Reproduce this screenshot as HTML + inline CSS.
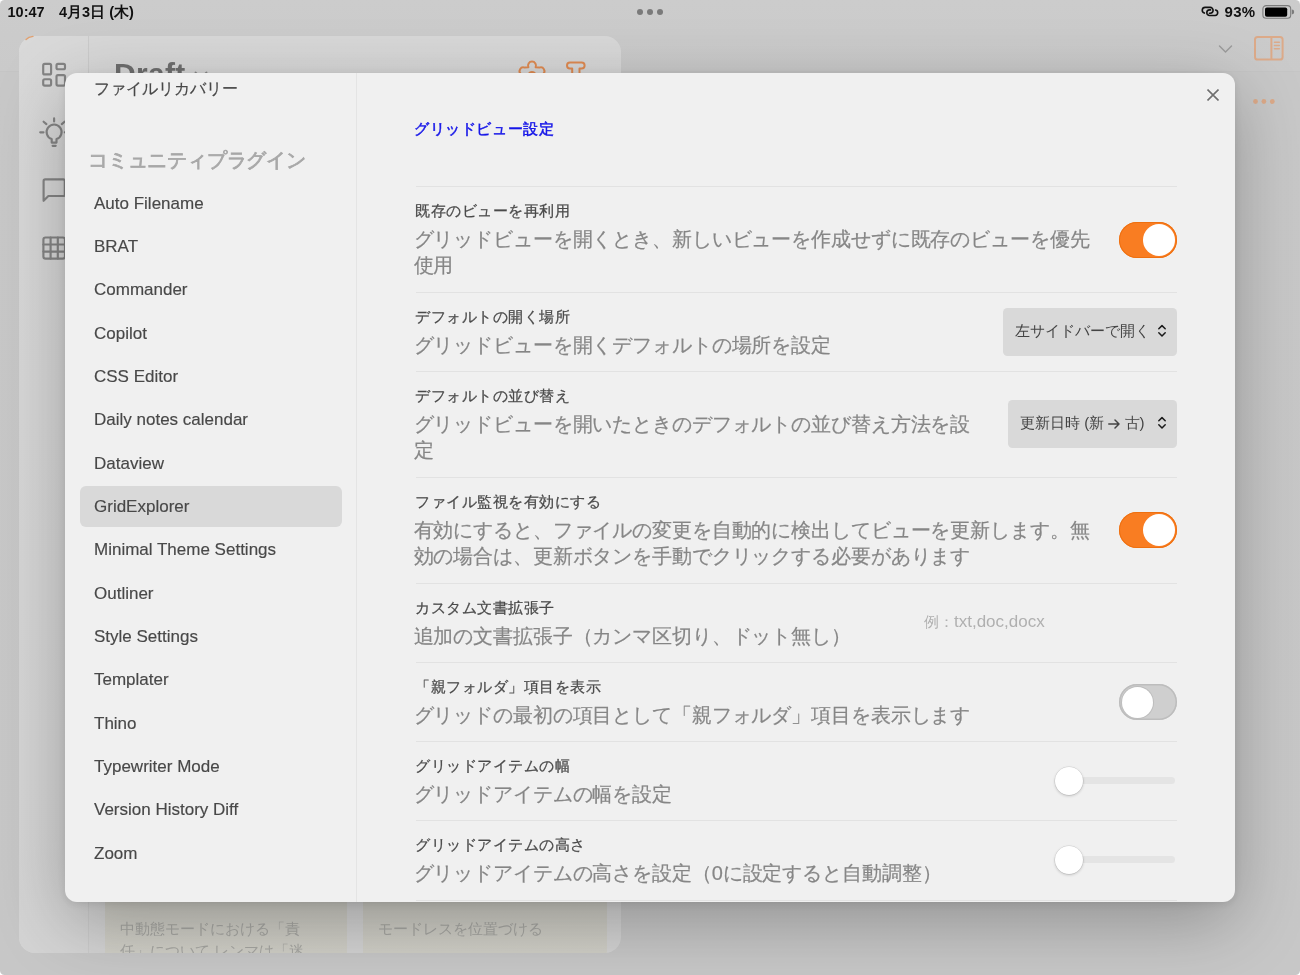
<!DOCTYPE html>
<html lang="ja">
<head>
<meta charset="utf-8">
<style>
*{box-sizing:border-box;margin:0;padding:0}
html,body{width:1300px;height:975px;overflow:hidden}
body>*{will-change:transform}
body{position:relative;background:#fff;font-family:"Liberation Sans",sans-serif;color:#4a4a4a}
.a{position:absolute;white-space:nowrap}
/* bg */
#bgl{position:absolute;left:0;top:0;width:1300px;height:975px;border-radius:4.5px;background:linear-gradient(180deg,#cccccc 0px,#cacaca 71px,#c5c5c5 71px,#c5c5c5 72px,#c8c8c8 72px,#c7c7c7 100%)}
#sb{position:absolute;left:0;top:0;width:1300px;height:30px}
#bw{position:absolute;left:19px;top:36px;width:602px;height:917px;border-radius:16px;background:linear-gradient(180deg,#d8d8d8 0%,#d3d3d3 100%);overflow:hidden}
#bwside{position:absolute;left:0;top:0;width:70px;height:917px;background:linear-gradient(180deg,#d9d9d9 0%,#d4d4d4 100%);border-right:1px solid #cbcbcb}
.card{position:absolute;top:800px;height:117px;background:linear-gradient(180deg,#c6c5be 0%,#d0cfc7 100%)}
.ct{position:absolute;left:15px;top:82px;font-size:15px;line-height:21.5px;color:#a6a6a2}
/* modal */
#modal{position:absolute;left:65px;top:73px;width:1170px;height:829px;border-radius:12px;background:#f0f0f0;overflow:hidden;box-shadow:0 20px 70px rgba(0,0,0,0.27),0 2px 10px rgba(0,0,0,0.1)}
#mside{position:absolute;left:0;top:0;width:292px;height:829px;border-right:1px solid #e4e4e4}
.item{position:absolute;left:29px;font-size:17px;line-height:20px;color:#484848;-webkit-text-stroke:0.15px #484848}
.nm{position:absolute;left:350px;font-size:15px;letter-spacing:0.5px;line-height:20px;color:#4a4a4a;-webkit-text-stroke:0.25px #4a4a4a}
.ds{position:absolute;left:348.5px;letter-spacing:-0.12px;font-size:20px;line-height:26.6px;color:#868686;-webkit-text-stroke:0.2px #868686}
.hr{position:absolute;left:351px;width:761px;height:1px;background:#e2e2e2}
.tog{position:absolute;left:1054px;width:58px;height:36px;border-radius:18px;background:#f97d22;box-shadow:inset 0 0 0 1px #ee7010}
.tog::after{content:"";position:absolute;right:2px;top:2px;width:32px;height:32px;border-radius:50%;background:#fff}
.tog.off{background:#cfcfcf;box-shadow:inset 0 0 0 1.5px #bdbdbd}
.tog.off::after{left:2.5px;top:2.5px;width:31px;height:31px;right:auto;box-shadow:0 0 0 1px #bdbdbd}
.dd{position:absolute;height:48px;border-radius:4.5px;background:#d9d9d9;font-size:15px;line-height:46px;color:#444;padding-left:12px}
.sl{position:absolute;left:1000px;width:110px;height:7px;border-radius:4px;background:#e4e4e4}
.chev{position:absolute;right:10.5px;top:16px}
.knob{position:absolute;left:990px;width:28px;height:28px;border-radius:50%;background:#fff;box-shadow:0 1px 3px rgba(0,0,0,0.2),0 0 0 0.5px rgba(0,0,0,0.12)}
</style>
</head>
<body>
<div id="bgl"></div>
<div id="sb">
  <div class="a" style="left:7.5px;top:4px;font-size:14.5px;line-height:16px;font-weight:700;color:#111">10:47</div>
  <div class="a" style="left:59px;top:4px;font-size:14.5px;line-height:16px;font-weight:700;color:#111">4月3日 (木)</div>
  <div class="a" style="left:637px;top:9px;width:6px;height:6px;border-radius:50%;background:#7a7a7a"></div>
  <div class="a" style="left:647px;top:9px;width:6px;height:6px;border-radius:50%;background:#7a7a7a"></div>
  <div class="a" style="left:656.5px;top:9px;width:6px;height:6px;border-radius:50%;background:#7a7a7a"></div>
  <div class="a" style="left:1224.5px;top:4px;font-size:15px;letter-spacing:0.3px;line-height:16px;font-weight:700;color:#111">93%</div>
  <svg class="a" style="left:0;top:0" width="1300" height="30" viewBox="0 0 1300 30">
    <g fill="none" stroke="#111" stroke-width="1.6" stroke-linecap="round">
      <path d="M1204.4 13.1A2.9 2.9 0 0 1 1205.1 7.4H1210.2A2.9 2.9 0 0 1 1210.2 13.2H1209.4"/>
      <path d="M1215.6 10A2.8 2.8 0 0 1 1215.1 15.5H1209.6A2.8 2.8 0 0 1 1209.6 9.9H1210.6"/>
    </g>
    <rect x="1262.9" y="5.6" width="27.8" height="12.6" rx="3.3" fill="none" stroke="#7b7b7b" stroke-width="1.1"/>
    <rect x="1265" y="7.5" width="22.2" height="9.2" rx="1.8" fill="#000"/>
    <path d="M1291.8 9.6 a2.4 2.4 0 0 1 0 4.8z" fill="#7b7b7b"/>
  </svg>
</div>

<div id="bw">
  <div id="bwside"></div>
  <div class="a" style="left:95px;top:21px;font-size:30px;letter-spacing:0.3px;line-height:34px;font-weight:700;color:#6f6f6f">Draft</div>
  <div class="card" style="left:86px;width:242px"><div class="ct">中動態モードにおける「責<br>任」について レンマは「迷</div></div>
  <div class="card" style="left:344px;width:244px"><div class="ct">モードレスを位置づける</div></div>
</div>
<svg class="a" style="left:0;top:0" width="1300" height="975" viewBox="0 0 1300 975">
  <g fill="none" stroke="#858585" stroke-width="2.15" stroke-linecap="round" stroke-linejoin="round">
    <rect x="43.2" y="63.9" width="7.9" height="10.5" rx="1.5"/>
    <rect x="56.5" y="63.9" width="8.5" height="5.3" rx="1.5"/>
    <rect x="43.2" y="79.2" width="7.9" height="6.4" rx="1.5"/>
    <rect x="56.5" y="75.1" width="8.5" height="10.5" rx="1.5"/>
    <path d="M51.7 142.6V139.1A7.5 7.5 0 1 1 56.5 139.1V142.6Z"/>
    <path d="M52.6 145.8H55.7M54.1 118.4V121.4M40.2 132.3H43.5M43.6 121.7L46.4 124.1M64.6 121.7L61.8 124.1M64.8 132.3H68"/>
    <path d="M43.6 200.8V181A1.6 1.6 0 0 1 45.2 179.4H63.2A1.6 1.6 0 0 1 64.8 181V194.4A1.6 1.6 0 0 1 63.2 196H48.4Z"/>
    <rect x="43.4" y="237.5" width="21.6" height="21.1" rx="2.2"/>
    <path d="M50.6 237.5V258.6M57.8 237.5V258.6M43.4 244.5H65M43.4 251.6H65"/>
  </g>
  <g fill="none" stroke="#e08b52" stroke-width="2" stroke-linecap="round" stroke-linejoin="round">
    <path d="M520.8 74 A3.8 3.8 0 0 1 524.6 67.6 L528.4 67.3 A4 4 0 1 1 535.6 67.3 L539.4 67.6 A3.8 3.8 0 0 1 543.2 74"/>
    <path d="M528.6 74.5 A3.6 3.6 0 0 1 535.4 74.5"/>
    <path d="M572.2 76V68.6H570A3 3 0 0 1 570 62.6H581.6A3 3 0 0 1 581.6 68.6H579.5V76"/>
  </g>
  <path d="M26 39.5Q28.5 36.8 33 36.4" fill="none" stroke="#e0a070" stroke-width="1.4" stroke-linecap="round"/>
  <path d="M195.5 72.5L201 78L206.5 72.5" fill="none" stroke="#8a8a8a" stroke-width="1.8" stroke-linecap="round"/>
  <path d="M1219.5 46L1225.5 52L1231.5 46" fill="none" stroke="#9a9a9a" stroke-width="1.4" stroke-linecap="round" stroke-linejoin="round"/>
  <g fill="none" stroke="#dcaa89" stroke-width="2">
    <rect x="1255" y="37" width="27.6" height="22.5" rx="2.6"/>
    <path d="M1271.4 37V59.5"/>
    <path d="M1274.5 42.3H1279.3M1274.5 45.5H1279.3M1274.5 48.7H1279.3" stroke-width="1.6" stroke-linecap="round"/>
  </g>
  <g fill="#dcaa89"><circle cx="1255.5" cy="101.5" r="2.4"/><circle cx="1263.9" cy="101.5" r="2.4"/><circle cx="1272.3" cy="101.5" r="2.4"/></g>
</svg>

<div id="modal">
  <div id="mside">
    <div class="item" style="top:6px;font-size:16px;-webkit-text-stroke:0.2px #484848">ファイルリカバリー</div>
    <div class="item" style="left:23px;top:75px;font-size:20px;letter-spacing:-0.2px;line-height:24px;color:#a8a8a8;-webkit-text-stroke:0.8px #a8a8a8">コミュニティプラグイン</div>
    <div class="a" style="left:14.5px;top:413px;width:262.5px;height:41px;border-radius:6px;background:#d9d9d9"></div>
    <div class="item" style="top:121px">Auto Filename</div>
    <div class="item" style="top:164px">BRAT</div>
    <div class="item" style="top:207px">Commander</div>
    <div class="item" style="top:251px">Copilot</div>
    <div class="item" style="top:294px">CSS Editor</div>
    <div class="item" style="top:337px">Daily notes calendar</div>
    <div class="item" style="top:381px">Dataview</div>
    <div class="item" style="top:424px">GridExplorer</div>
    <div class="item" style="top:467px">Minimal Theme Settings</div>
    <div class="item" style="top:511px">Outliner</div>
    <div class="item" style="top:554px">Style Settings</div>
    <div class="item" style="top:597px">Templater</div>
    <div class="item" style="top:641px">Thino</div>
    <div class="item" style="top:684px">Typewriter Mode</div>
    <div class="item" style="top:727px">Version History Diff</div>
    <div class="item" style="top:771px">Zoom</div>
  </div>
  <div class="a" style="left:1142px;top:16px;width:12px;height:12px"><svg width="12" height="12" viewBox="0 0 12 12" style="display:block"><path d="M0.5 0.5L11.5 11.5M11.5 0.5L0.5 11.5" stroke="#6f6f6f" stroke-width="1.6" fill="none"/></svg></div>
  <div class="a" style="left:349px;top:46px;font-size:15px;letter-spacing:0.6px;line-height:20px;color:#1616e8;-webkit-text-stroke:0.5px #1616e8">グリッドビュー設定</div>
  <div class="hr" style="top:113px"></div>
  <div class="hr" style="top:219px"></div>
  <div class="hr" style="top:298px"></div>
  <div class="hr" style="top:404px"></div>
  <div class="hr" style="top:510px"></div>
  <div class="hr" style="top:589px"></div>
  <div class="hr" style="top:668px"></div>
  <div class="hr" style="top:747px"></div>
  <div class="hr" style="top:827px"></div>
  <div class="nm" style="top:128px">既存のビューを再利用</div>
  <div class="ds" style="top:152.5px">グリッドビューを開くとき、新しいビューを作成せずに既存のビューを優先<br>使用</div>
  <div class="nm" style="top:234px">デフォルトの開く場所</div>
  <div class="ds" style="top:258.5px">グリッドビューを開くデフォルトの場所を設定</div>
  <div class="nm" style="top:313px">デフォルトの並び替え</div>
  <div class="ds" style="top:337.5px">グリッドビューを開いたときのデフォルトの並び替え方法を設<br>定</div>
  <div class="nm" style="top:419px">ファイル監視を有効にする</div>
  <div class="ds" style="top:443.5px">有効にすると、ファイルの変更を自動的に検出してビューを更新します。無<br>効の場合は、更新ボタンを手動でクリックする必要があります</div>
  <div class="nm" style="top:525px">カスタム文書拡張子</div>
  <div class="ds" style="top:549.5px">追加の文書拡張子（カンマ区切り、ドット無し）</div>
  <div class="nm" style="top:604px">「親フォルダ」項目を表示</div>
  <div class="ds" style="top:628.5px">グリッドの最初の項目として「親フォルダ」項目を表示します</div>
  <div class="nm" style="top:683px">グリッドアイテムの幅</div>
  <div class="ds" style="top:707.5px">グリッドアイテムの幅を設定</div>
  <div class="nm" style="top:762px">グリッドアイテムの高さ</div>
  <div class="ds" style="top:786.5px">グリッドアイテムの高さを設定（0に設定すると自動調整）</div>
  <div class="tog" style="top:149px"></div>
  <div class="dd" style="left:938px;top:235px;width:174px">左サイドバーで開く<svg class="chev" width="10" height="14" viewBox="0 0 10 14"><path d="M1.8 4.8L5 1.6L8.2 4.8M1.8 8.8L5 12L8.2 8.8" stroke="#1a1a1a" stroke-width="1.5" fill="none" stroke-linecap="round" stroke-linejoin="round"/></svg></div>
  <div class="dd" style="left:943px;top:327px;width:169px">更新日時 (新 <svg width="12" height="10" viewBox="0 0 12 10" style="vertical-align:-0.5px"><path d="M0.8 5H11M7 1L11 5L7 9" fill="none" stroke="#444" stroke-width="1.5" stroke-linecap="round" stroke-linejoin="round"/></svg> 古)<svg class="chev" width="10" height="14" viewBox="0 0 10 14"><path d="M1.8 4.8L5 1.6L8.2 4.8M1.8 8.8L5 12L8.2 8.8" stroke="#1a1a1a" stroke-width="1.5" fill="none" stroke-linecap="round" stroke-linejoin="round"/></svg></div>
  <div class="tog" style="top:439px"></div>
  <div class="a" style="left:859px;top:538.5px;font-size:15px;line-height:20px;color:#b0b0b0">例：<span style="font-size:17px">txt,doc,docx</span></div>
  <div class="tog off" style="top:611px"></div>
  <div class="sl" style="top:704px"></div><div class="knob" style="top:694px"></div>
  <div class="sl" style="top:783px"></div><div class="knob" style="top:773px"></div>
</div>
</body>
</html>
